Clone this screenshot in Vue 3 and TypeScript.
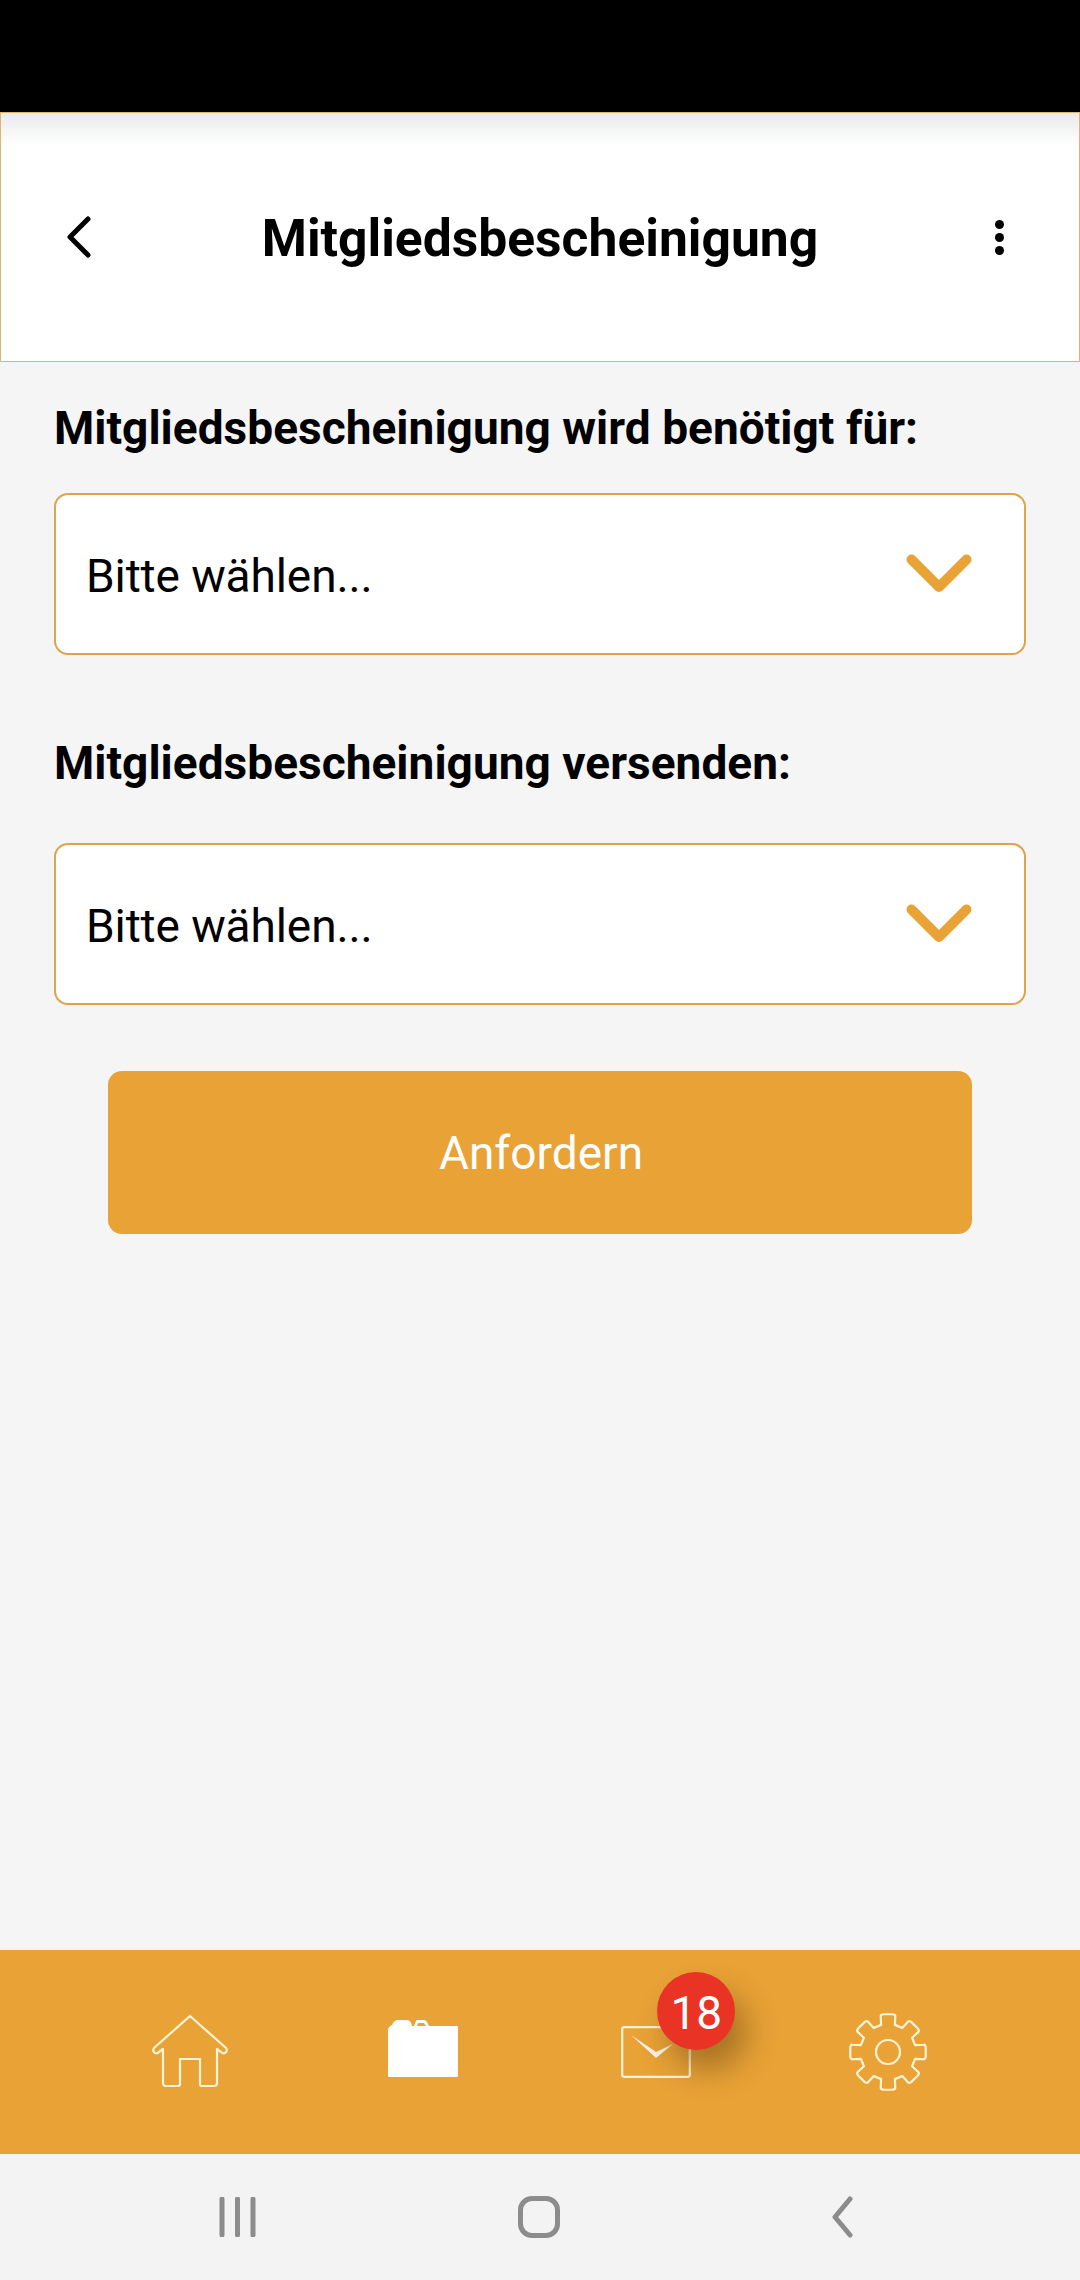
<script setup lang="ts">
import { computed } from "vue";

const gearPath = computed(() => {
  const parts: string[] = [];
  const toPoint = (r: number, a: number) =>
    `${(40 + r * Math.sin(a)).toFixed(2)} ${(40 - r * Math.cos(a)).toFixed(2)}`;
  for (let i = 0; i < 8; i++) {
    const a = (i * Math.PI) / 4;
    parts.push(`${i === 0 ? "M" : "L"}${toPoint(28, a - 0.25)}`);
    parts.push(`L${toPoint(36.5, a - 0.2)}`);
    parts.push(`Q${toPoint(38, a - 0.2)} ${toPoint(38, a - 0.12)}`);
    parts.push(`L${toPoint(38, a + 0.12)}`);
    parts.push(`Q${toPoint(38, a + 0.2)} ${toPoint(36.5, a + 0.2)}`);
    parts.push(`L${toPoint(28, a + 0.25)}`);
  }
  return parts.join(" ") + " Z";
});
</script>

<template>
  <div class="page">
    <div class="statusBar"></div>
    <header class="header">
      <svg class="backIcon" width="30" height="44" viewBox="0 0 30 44">
        <path d="M26 4 L8 22 L26 40" fill="none" stroke="#000" stroke-width="5" stroke-linecap="round" stroke-linejoin="round" />
      </svg>
      <h1 class="title">Mitgliedsbescheinigung</h1>
      <div class="dots"><span></span><span></span><span></span></div>
    </header>

    <main class="content">
      <div class="label firstLabel">Mitgliedsbescheinigung wird benötigt für:</div>
      <div class="select">
        <span class="selectText">Bitte wählen...</span>
        <svg width="66" height="40" viewBox="0 0 66 40">
          <path d="M5.5 5.5 L33 33 L60.5 5.5" fill="none" stroke="#e8a236" stroke-width="10" stroke-linecap="round" stroke-linejoin="round" />
        </svg>
      </div>
      <div class="label secondLabel">Mitgliedsbescheinigung versenden:</div>
      <div class="select">
        <span class="selectText">Bitte wählen...</span>
        <svg width="66" height="40" viewBox="0 0 66 40">
          <path d="M5.5 5.5 L33 33 L60.5 5.5" fill="none" stroke="#e8a236" stroke-width="10" stroke-linecap="round" stroke-linejoin="round" />
        </svg>
      </div>
      <button class="submit">Anfordern</button>
    </main>

    <nav class="tabBar">
      <div class="tab">
        <svg width="80" height="76" viewBox="0 0 80 76">
          <path
            d="M40 2 L76 34 Q78 37 75 39 Q73 40 71 38 L67 35 V69 Q67 72 64 72 H52 Q50 72 50 70 V45 H30 V70 Q30 72 28 72 H16 Q13 72 13 69 V35 L9 38 Q7 40 5 39 Q2 37 4 34 Z"
            fill="none" stroke="#fff3d6" stroke-width="2.2" stroke-linejoin="round"
          />
        </svg>
      </div>
      <div class="tab">
        <svg class="folder" width="72" height="60" viewBox="0 0 72 60">
          <path d="M1 12 Q1 9 5 7 Q7 2 11 2 H20 Q24 2 25 8 H70 Q71 8 71 9 V58 Q71 59 70 59 H2 Q1 59 1 58 Z" fill="#fff" />
          <path d="M27 8 L29 3 Q29 2 31 2 H37 Q39 2 40 4 L42 8 H39 L37 5 H31 L30 8 Z" fill="#fff" />
        </svg>
      </div>
      <div class="tab">
        <div class="mail">
          <svg width="70" height="52" viewBox="0 0 70 52">
            <rect x="1.2" y="1.2" width="67.6" height="49.6" rx="2" fill="none" stroke="#fff3d6" stroke-width="2.2" />
            <path d="M10 9 L35 32 L52 18 L35 26 Z" fill="#f7f3ea" />
          </svg>
          <div class="badge">18</div>
        </div>
      </div>
      <div class="tab">
        <svg width="80" height="80" viewBox="0 0 80 80">
          <path :d="gearPath" fill="none" stroke="#fff3d6" stroke-width="2.2" stroke-linejoin="round" />
          <circle cx="40" cy="40" r="12" fill="none" stroke="#fff3d6" stroke-width="2.2" />
        </svg>
      </div>
    </nav>

    <div class="systemBar">
      <svg width="39" height="40" viewBox="0 0 39 40">
        <path d="M4 2 V38 M19.5 2 V38 M35 2 V38" stroke="#8c8c8c" stroke-width="5" stroke-linecap="round" />
      </svg>
      <div class="homeButton"></div>
      <svg class="navBack" width="22" height="42" viewBox="0 0 22 42">
        <path d="M19 3 L4 21 L19 39" fill="none" stroke="#8c8c8c" stroke-width="5" stroke-linecap="round" stroke-linejoin="round" />
      </svg>
    </div>
  </div>
</template>

<style>
html,
body {
  margin: 0;
  background: #f5f5f5;
}
</style>

<style scoped>
.page {
  width: 1080px;
  height: 2280px;
  display: flex;
  flex-direction: column;
  background: #f5f5f5;
  font-family: Roboto, "Liberation Sans", sans-serif;
  color: #000000;
  overflow: hidden;
}

.statusBar {
  height: 112px;
  background: #000000;
}

.header {
  box-sizing: border-box;
  height: 250px;
  display: grid;
  grid-template-columns: 1fr auto 1fr;
  align-items: center;
  padding: 0 61px;
  background: linear-gradient(#e9eaeb 0, #ffffff 32px) #ffffff;
  border: 1px solid #ddb672;
}

.title {
  margin: 3px 0 0;
  font-size: 51.6px;
  font-weight: 700;
  line-height: 60px;
}

.dots {
  display: flex;
  flex-direction: column;
  gap: 4px;
  justify-self: end;
  margin-right: 14px;
}

.dots span {
  width: 9px;
  height: 9px;
  border-radius: 50%;
  background: #000000;
}

.content {
  flex: 1;
  display: flex;
  flex-direction: column;
  padding: 0 54px;
}

.label {
  font-size: 46px;
  font-weight: 700;
  line-height: 56px;
  letter-spacing: 0.03px;
}

.firstLabel {
  margin-top: 38px;
  margin-bottom: 37px;
}

.secondLabel {
  margin-top: 80px;
  margin-bottom: 52px;
}

.select {
  box-sizing: border-box;
  height: 162px;
  display: flex;
  align-items: center;
  justify-content: space-between;
  padding: 0 52px 0 30px;
  background: #ffffff;
  border: 2px solid #dfa44a;
  border-radius: 14px;
  font-size: 46px;
}

.selectText {
  margin-top: 3px;
  letter-spacing: -0.1px;
}

.submit {
  align-self: center;
  width: 864px;
  height: 163px;
  margin-top: 66px;
  padding-left: 8px;
  border: none;
  border-radius: 14px;
  background: #e8a236;
  color: #ffffff;
  font-family: inherit;
  font-size: 46px;
}

.tabBar {
  height: 204px;
  display: flex;
  justify-content: center;
  padding-right: 2px;
  background: #e8a236;
}

.tab {
  width: 232.5px;
  display: flex;
  align-items: center;
  justify-content: center;
}

.folder {
  margin-top: -8px;
}

.mail {
  position: relative;
  display: flex;
  margin-left: 2px;
}

.badge {
  position: absolute;
  left: 36px;
  top: -54px;
  width: 78px;
  height: 78px;
  border-radius: 50%;
  background: #e83325;
  color: #ffffff;
  font-size: 46px;
  line-height: 82px;
  text-align: center;
  box-shadow: 12px 20px 30px rgba(90, 60, 20, 0.45);
}

.systemBar {
  height: 126px;
  display: flex;
  align-items: center;
  padding-left: 218px;
  gap: 261px;
  background: #f3f3f3;
}

.homeButton {
  box-sizing: border-box;
  width: 42px;
  height: 42px;
  border: 5px solid #8c8c8c;
  border-radius: 14px;
}

.navBack {
  margin-left: 10px;
}
</style>
